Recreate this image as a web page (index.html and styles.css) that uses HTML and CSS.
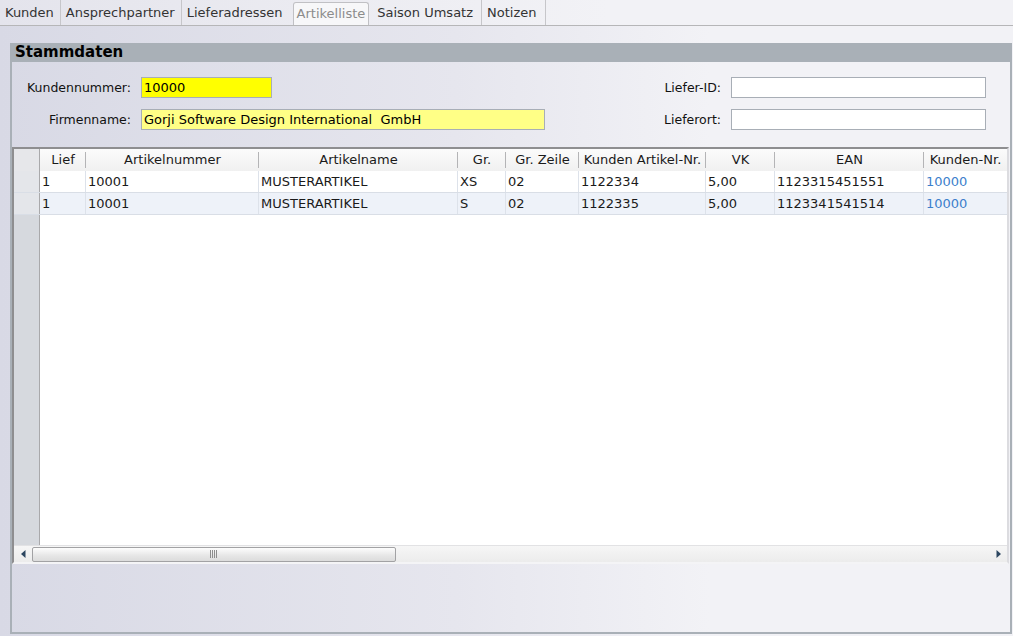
FILE: index.html
```html
<!DOCTYPE html>
<html lang="de">
<head>
<meta charset="utf-8">
<title>Artikelliste</title>
<link rel="stylesheet" href="styles.css">
</head>
<body>
<div class="tabs">
  <div class="tab">Kunden</div>
  <div class="tab">Ansprechpartner</div>
  <div class="tab before-active">Lieferadressen</div>
  <div class="tab active">Artikelliste</div>
  <div class="tab after after-active">Saison Umsatz</div>
  <div class="tab after">Notizen</div>
</div>

<div class="panel">
  <div class="panel-head">Stammdaten</div>
  <div class="form">
    <label class="lbl">Kundennummer:</label>
    <div class="field short yellow">10000</div>
    <div class="spacer"></div>
    <label class="lbl">Liefer-ID:</label>
    <div class="field"></div>

    <label class="lbl">Firmenname:</label>
    <div class="field wide lightyellow">Gorji Software Design International&nbsp; GmbH</div>
    <div class="spacer"></div>
    <label class="lbl">Lieferort:</label>
    <div class="field"></div>
  </div>

  <div class="grid">
    <div class="row head">
      <div class="cell rh"></div>
      <div class="cell">Lief</div>
      <div class="cell">Artikelnummer</div>
      <div class="cell">Artikelname</div>
      <div class="cell">Gr.</div>
      <div class="cell">Gr. Zeile</div>
      <div class="cell">Kunden Artikel-Nr.</div>
      <div class="cell">VK</div>
      <div class="cell">EAN</div>
      <div class="cell last">Kunden-Nr.</div>
    </div>
    <div class="body">
      <div class="row data">
        <div class="cell rh"></div>
        <div class="cell">1</div>
        <div class="cell">10001</div>
        <div class="cell">MUSTERARTIKEL</div>
        <div class="cell">XS</div>
        <div class="cell">02</div>
        <div class="cell">1122334</div>
        <div class="cell">5,00</div>
        <div class="cell">1123315451551</div>
        <div class="cell last link">10000</div>
      </div>
      <div class="row data alt">
        <div class="cell rh"></div>
        <div class="cell">1</div>
        <div class="cell">10001</div>
        <div class="cell">MUSTERARTIKEL</div>
        <div class="cell">S</div>
        <div class="cell">02</div>
        <div class="cell">1122335</div>
        <div class="cell">5,00</div>
        <div class="cell">1123341541514</div>
        <div class="cell last link">10000</div>
      </div>
    </div>
    <div class="hscroll">
      <div class="arrow"><svg width="5" height="8" viewBox="0 0 5 8"><polygon points="4.5,0 0,4 4.5,8" fill="#2c4660"/></svg></div>
      <div class="thumb"><svg width="8" height="8" viewBox="0 0 8 8"><path d="M0.5 0V8M2.5 0V8M4.5 0V8M6.5 0V8" stroke="#8e8e8e" stroke-width="1"/></svg></div>
      <div class="track"></div>
      <div class="arrow"><svg width="5" height="8" viewBox="0 0 5 8"><polygon points="0.5,0 5,4 0.5,8" fill="#2c4660"/></svg></div>
    </div>
  </div>
  <div class="panel-foot"></div>
</div>
</body>
</html>
```

FILE: styles.css
```css
* { box-sizing: border-box; }

html, body {
  margin: 0;
  height: 636px;
}

body {
  font-family: "DejaVu Sans", Verdana, sans-serif;
  color: #1a1a1a;
  background: linear-gradient(to right, #d8d9e5 0%, #e6e6ee 45%, #f2f2f6 70%, #f2f2f6 100%);
  overflow: hidden;
}

/* ---------- tabs ---------- */
.tabs {
  display: flex;
  height: 26px;
  border-bottom: 1px solid #b6b6b8;
  margin-bottom: 17px;
  background: linear-gradient(to right, #e4e4ec, #f2f2f6 60%);
}

.tab {
  font-size: 13px;
  line-height: 25px;
  padding: 0 6px 0 5px;
  color: #333;
  border-right: 1px solid #c6c6ca;
  white-space: nowrap;
}

.tab.before-active { border-right: none; padding-right: 10px; }

.tab.active {
  margin-top: 2px;
  line-height: 22px;
  padding: 0 3px 0 3px;
  color: #8c8c8c;
  background: #f7f7f9;
  border: 1px solid #c0c0c4;
  border-bottom: none;
  border-radius: 3px 3px 0 0;
}

.tab.after { padding: 0 8px 0 5px; }
.tab.after-active { padding-left: 8px; }

/* ---------- panel ---------- */
.panel {
  margin: 0 1px 0 10px;
  height: 591px;
  border: 2px solid #a9b0b7;
  border-top: none;
  display: flex;
  flex-direction: column;
}

.panel-head {
  height: 19px;
  margin: 0 -2px;
  padding-left: 5px;
  background: #a9b0b7;
  font-size: 15px;
  font-weight: bold;
  line-height: 19px;
  color: #000;
}

.form {
  display: grid;
  grid-template-columns: 119px 404px 1fr auto 255px;
  column-gap: 10px;
  row-gap: 11px;
  padding: 15px 24px 17px 0;
  align-items: center;
}

.lbl {
  font-size: 12.5px;
  text-align: right;
  color: #111;
}

.field {
  height: 21px;
  border: 1px solid #a8aeb6;
  background: #fff;
  font-size: 13px;
  line-height: 19px;
  padding-left: 2px;
  color: #000;
  white-space: nowrap;
}

.field.short { width: 131px; }
.field.wide { width: 404px; }
.field.yellow { background: #ffff00; }
.field.lightyellow { background: #ffff86; }

/* ---------- grid ---------- */
.grid {
  height: 417px;
  margin-right: 1px;
  border-top: 2px solid #8e8e90;
  border-left: 2px solid #8e8e90;
  border-right: 2px solid #dcdce0;
  border-bottom: 2px solid #f4f4f6;
  display: flex;
  flex-direction: column;
  background: #fff;
}

.row {
  display: grid;
  grid-template-columns: 26px 46px 173px 199px 48px 73px 127px 69px 149px 83px;
  height: 22px;
  font-size: 13px;
  line-height: 21px;
  white-space: nowrap;
}

.cell { overflow: hidden; }

.row.head {
  background: linear-gradient(#fbfbfb, #f0f0f0);
  height: 22px;
}

.row.head .cell {
  text-align: center;
  line-height: 22px;
  background-image: linear-gradient(#b4b4b6, #b4b4b6);
  background-size: 1px 16px;
  background-position: right center;
  background-repeat: no-repeat;
}

.row.head .cell.last { background-image: none; }

.row.head .cell.rh {
  background: #e6e7ea;
  border-right: 1px solid #a9a9ab;
}

.body {
  flex: 1;
  background: linear-gradient(to right, #d6d9de 0 25px, #a9a9ab 25px 26px, #fff 26px);
}

.row.data {
  background: #fff;
  border-bottom: 1px solid #d9dee6;
}

.row.data.alt { background: #eef2f9; }

.row.data .cell {
  padding-left: 2px;
  border-right: 1px solid #dde2ea;
}

.row.data .cell.last { border-right: none; }

.row.data .cell.rh {
  background: #e4e6ea;
  border-right: 1px solid #a9a9ab;
}

.link { color: #3d7fcc; }

/* ---------- scrollbar ---------- */
.hscroll {
  height: 17px;
  display: flex;
  align-items: center;
  background: linear-gradient(#f6f6f6, #ececec);
  border-top: 1px solid #e2e2e4;
}

.arrow {
  width: 18px;
  height: 16px;
  display: flex;
  align-items: center;
  justify-content: center;
}

.thumb {
  width: 364px;
  height: 15px;
  border: 1px solid #a2a2a4;
  border-radius: 2px;
  background: linear-gradient(#fdfdfd, #e6e6e6 60%, #dcdcdc);
  display: flex;
  align-items: center;
  justify-content: center;
}

.track { flex: 1; }

.panel-foot { flex: 1; }
```
